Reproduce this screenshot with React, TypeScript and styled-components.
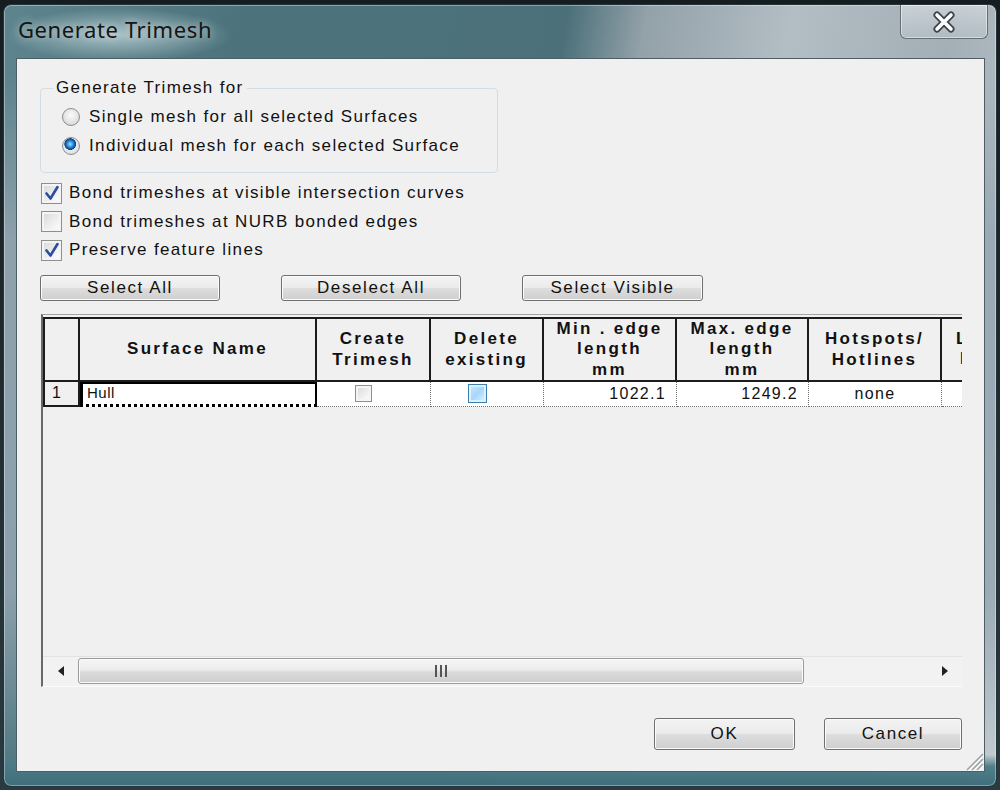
import React from 'react';
import styled, { createGlobalStyle } from 'styled-components';

const GlobalStyle = createGlobalStyle`
  html, body {
    margin: 0;
    padding: 0;
    background: #1f2b2f;
  }
  * {
    box-sizing: border-box;
  }
`;

const UI_FONT = `"Liberation Sans", Arial, sans-serif`;

const Desktop = styled.div`
  width: 1000px;
  height: 790px;
  padding: 4px 0 0 3px;
  overflow: hidden;
  background: linear-gradient(180deg, #151d20 0%, #2a3a40 100%);
`;

const Window = styled.div`
  width: 994px;
  height: 783px;
  display: flex;
  flex-direction: column;
  padding: 0 11px 14px 12px;
  border: 1px solid #25343a;
  border-radius: 8px;
  box-shadow: inset 0 0 0 1px rgba(255, 255, 255, 0.35);
  background:
    linear-gradient(180deg, transparent 96%, rgba(74, 122, 134, 0.95) 97.5%, #3f6d79 100%),
    linear-gradient(180deg, transparent 9%, rgba(150, 166, 178, 0.85) 30%, rgba(150, 166, 178, 0.85) 75%, transparent 96%),
    radial-gradient(ellipse 150px 36px at 115px 30px, rgba(225, 238, 240, 0.6), transparent 75%),
    linear-gradient(100deg, #5e858e 0%, #4c737c 22%, #4b7079 50%, #93a1a9 57%, #b3bdc4 70%, #a3aeb6 84%, #c3cbd1 100%);
`;

const TitleBar = styled.div`
  height: 53px;
  display: flex;
  justify-content: space-between;
  align-items: flex-start;
  flex-shrink: 0;
`;

const Title = styled.div`
  padding: 9px 0 0 2px;
  font-family: "Noto Sans", "Open Sans", sans-serif;
  font-size: 22px;
  letter-spacing: 0.6px;
  color: #151515;
  text-shadow: 0 0 8px rgba(255, 255, 255, 0.6);
`;

const CloseButton = styled.div`
  width: 88px;
  height: 34px;
  margin-right: -3px;
  display: flex;
  align-items: center;
  justify-content: center;
  border: 1px solid #646e74;
  border-top: none;
  border-radius: 0 0 6px 6px;
  background: linear-gradient(180deg, rgba(230, 235, 238, 0.55), rgba(190, 200, 206, 0.45));
  box-shadow: inset 0 0 0 1px rgba(255, 255, 255, 0.45);
`;

const Client = styled.div`
  position: relative;
  flex: 1;
  display: flex;
  flex-direction: column;
  padding: 0 22px 0 23px;
  background: #f0f0f0;
  border: 1px solid #4d5e65;
  font-family: ${UI_FONT};
  font-size: 17px;
  letter-spacing: 1.35px;
  color: #111;
`;

const Group = styled.fieldset`
  width: 458px;
  margin: 20px 0 0 0;
  padding: 5px 12px 12px 12px;
  border: 1px solid #d3dde3;
  border-radius: 4px;
`;

const Legend = styled.legend`
  padding: 0 3px;
  line-height: 18px;
`;

const OptionRow = styled.div`
  height: 29px;
  display: flex;
  align-items: center;
  gap: 9px;
  padding-left: 9px;
`;

const Radio = styled.span<{ $checked?: boolean }>`
  width: 18px;
  height: 18px;
  border-radius: 50%;
  border: 1px solid #8b8d8f;
  flex-shrink: 0;
  background: ${(p) =>
    p.$checked
      ? 'radial-gradient(circle at 45% 38%, #a6e0ff 0, #2a93de 22%, #0d4f98 38%, #0b3f7c 42%, #e9ecee 46%, #d3d6d8 100%)'
      : 'radial-gradient(circle at 50% 40%, #fbfbfb 0, #e4e4e4 55%, #c9c9c9 100%)'};
`;

const Checks = styled.div`
  margin-top: 6px;
`;

const CheckRow = styled.div`
  height: 28.5px;
  display: flex;
  align-items: center;
  gap: 7px;
  padding-left: 1px;
`;

const CheckBox = styled.span<{ $size?: number; $hot?: boolean }>`
  width: ${(p) => p.$size ?? 21}px;
  height: ${(p) => p.$size ?? 21}px;
  flex-shrink: 0;
  display: flex;
  align-items: center;
  justify-content: center;
  border: 1px solid ${(p) => (p.$hot ? '#3c7fb1' : '#8f8f8f')};
  background: ${(p) =>
    p.$hot
      ? 'linear-gradient(135deg, #cfeaff 0%, #a7d6fb 50%, #e6f4ff 100%)'
      : 'linear-gradient(135deg, #d6d6d6 0%, #ececec 50%, #ffffff 100%)'};
  box-shadow: inset 0 0 0 2px ${(p) => (p.$hot ? '#def0fd' : '#f4f4f4')};
`;

const ButtonRow = styled.div`
  display: flex;
  gap: 61px;
  margin-top: 10px;
`;

const PushButton = styled.button<{ $width: number; $height?: number }>`
  width: ${(p) => p.$width}px;
  height: ${(p) => p.$height ?? 26}px;
  padding: 0;
  border: 1px solid #707070;
  border-radius: 3px;
  background: linear-gradient(180deg, #f3f3f3 0%, #ebebeb 48%, #dddddd 52%, #cfcfcf 100%);
  box-shadow: inset 0 0 0 1px #fbfbfb;
  font-family: ${UI_FONT};
  font-size: 17px;
  letter-spacing: 1.6px;
  color: #111;
`;

const GridFrame = styled.div`
  width: 921px;
  height: 373px;
  margin: 13px 0 0 1px;
  display: flex;
  flex-direction: column;
  border-left: 2px solid #686868;
  border-top: 1px solid #a3a3a3;
  border-bottom: 1px solid #fbfbfb;
  padding-top: 2px;
  overflow: hidden;
`;

const cols = [37, 237, 114, 113, 133, 132, 133, 130];

const GridRows = styled.div`
  display: grid;
  grid-template-columns: ${cols.map((c) => `${c}px`).join(' ')};
  width: ${cols.reduce((a, b) => a + b, 0)}px;
`;

const HeaderCell = styled.div<{ $first?: boolean; $left?: boolean }>`
  height: 65px;
  display: flex;
  align-items: center;
  justify-content: ${(p) => (p.$left ? 'flex-start' : 'center')};
  padding: ${(p) => (p.$left ? '0 0 0 14px' : '1px 0 0 0')};
  text-align: center;
  white-space: pre-line;
  font-weight: bold;
  font-size: 17px;
  line-height: 20.5px;
  letter-spacing: 2.3px;
  background: #f0f0f0;
  border-top: 2px solid #1c1c1c;
  border-bottom: 2px solid #1c1c1c;
  border-right: 2px solid #1c1c1c;
  border-left: ${(p) => (p.$first ? '2px solid #1c1c1c' : 'none')};
`;

const RowHead = styled.div`
  height: 25px;
  padding-left: 7px;
  display: flex;
  align-items: center;
  background: #f0f0f0;
  border-left: 2px solid #1c1c1c;
  border-right: 2px solid #1c1c1c;
  border-bottom: 2px solid #1c1c1c;
  font-size: 16px;
`;

const NameCell = styled.div`
  height: 25px;
  padding-left: 4px;
  display: flex;
  align-items: center;
  background: #fff;
  border-left: 3px solid #000;
  border-right: 2px solid #000;
  border-bottom: 3px dotted #000;
  box-shadow: inset 0 2px 0 #000;
  font-size: 15px;
  letter-spacing: 0.5px;
`;

const DataCell = styled.div<{ $align?: 'left' | 'center' | 'right' }>`
  height: 25px;
  display: flex;
  align-items: center;
  justify-content: ${(p) =>
    p.$align === 'right' ? 'flex-end' : p.$align === 'left' ? 'flex-start' : 'center'};
  padding: ${(p) => (p.$align === 'right' ? '0 10px 0 0' : p.$align === 'left' ? '0 0 0 35px' : '0')};
  background: #fff;
  border-right: 1px dotted #6d6d6d;
  border-bottom: 1px dotted #6d6d6d;
  font-size: 16px;
  letter-spacing: 1.3px;
`;

const Filler = styled.div`
  flex: 1;
  background: #f0f0f0;
`;

const HScroll = styled.div`
  height: 30px;
  display: flex;
  align-items: center;
  background: #f2f2f2;
  border-top: 1px solid #e2e2e2;
`;

const ScrollArrow = styled.div`
  width: 35px;
  height: 100%;
  display: flex;
  align-items: center;
  justify-content: center;
  flex-shrink: 0;
`;

const Track = styled.div`
  flex: 1;
  height: 100%;
  display: flex;
  align-items: center;
`;

const Thumb = styled.div`
  height: 26px;
  display: flex;
  align-items: center;
  justify-content: center;
  border: 1px solid #9c9c9c;
  border-radius: 3px;
  background: linear-gradient(180deg, #f6f6f6 0%, #ececec 45%, #dadada 55%, #cdcdcd 100%);
  box-shadow: inset 0 0 0 1px #fafafa;
`;

const Footer = styled.div`
  display: flex;
  justify-content: flex-end;
  gap: 29px;
  margin-top: 31px;
`;

const ResizeGrip = styled.div`
  position: absolute;
  right: 0;
  bottom: 0;
  width: 20px;
  height: 20px;
`;

const Label = styled.span``;

const Check = () => (
  <svg width="16" height="16" viewBox="0 0 16 16">
    <path d="M2.5 8.5 L6.5 13.5 L13.5 2" fill="none" stroke="#2c4c9e" strokeWidth="2.6" strokeLinecap="round" strokeLinejoin="round" />
  </svg>
);

const CloseGlyph = () => (
  <svg width="26" height="22" viewBox="0 0 26 22">
    <path d="M6 4 L20 18 M20 4 L6 18" stroke="#3b4348" strokeWidth="7" strokeLinecap="round" />
    <path d="M6 4 L20 18 M20 4 L6 18" stroke="#ffffff" strokeWidth="3.6" strokeLinecap="round" />
  </svg>
);

const headers = [
  '',
  'Surface Name',
  'Create\nTrimesh',
  'Delete\nexisting',
  'Min . edge\nlength\nmm',
  'Max. edge\nlength\nmm',
  'Hotspots/\nHotlines',
  'Layer\nLock',
];

export default function App() {
  return (
    <>
      <GlobalStyle />
      <Desktop>
        <Window>
          <TitleBar>
            <Title>Generate Trimesh</Title>
            <CloseButton>
              <CloseGlyph />
            </CloseButton>
          </TitleBar>
          <Client>
            <Group>
              <Legend>Generate Trimesh for</Legend>
              <OptionRow>
                <Radio />
                <Label>Single mesh for all selected Surfaces</Label>
              </OptionRow>
              <OptionRow>
                <Radio $checked />
                <Label>Individual mesh for each selected Surface</Label>
              </OptionRow>
            </Group>

            <Checks>
              <CheckRow>
                <CheckBox>
                  <Check />
                </CheckBox>
                <Label>Bond trimeshes at visible intersection curves</Label>
              </CheckRow>
              <CheckRow>
                <CheckBox />
                <Label>Bond trimeshes at NURB bonded edges</Label>
              </CheckRow>
              <CheckRow>
                <CheckBox>
                  <Check />
                </CheckBox>
                <Label>Preserve feature lines</Label>
              </CheckRow>
            </Checks>

            <ButtonRow>
              <PushButton $width={180}>Select All</PushButton>
              <PushButton $width={180}>Deselect All</PushButton>
              <PushButton $width={181}>Select Visible</PushButton>
            </ButtonRow>

            <GridFrame>
              <GridRows>
                {headers.map((h, i) => (
                  <HeaderCell key={i} $first={i === 0} $left={i === headers.length - 1}>
                    {h}
                  </HeaderCell>
                ))}
                <RowHead>1</RowHead>
                <NameCell>Hull</NameCell>
                <DataCell $align="center" style={{ paddingRight: 20 }}>
                  <CheckBox $size={17} />
                </DataCell>
                <DataCell $align="center" style={{ paddingRight: 20 }}>
                  <CheckBox $size={19} $hot />
                </DataCell>
                <DataCell $align="right">1022.1</DataCell>
                <DataCell $align="right">1249.2</DataCell>
                <DataCell $align="center">none</DataCell>
                <DataCell $align="left" />
              </GridRows>
              <Filler />
              <HScroll>
                <ScrollArrow>
                  <svg width="8" height="12" viewBox="0 0 8 12">
                    <polygon points="7,1 1,6 7,11" fill="#222" />
                  </svg>
                </ScrollArrow>
                <Track>
                  <Thumb style={{ width: 726 }}>
                    <svg width="16" height="14" viewBox="0 0 16 14">
                      <path d="M3 1 V13 M8 1 V13 M13 1 V13" stroke="#555" strokeWidth="2" />
                    </svg>
                  </Thumb>
                </Track>
                <ScrollArrow>
                  <svg width="8" height="12" viewBox="0 0 8 12">
                    <polygon points="1,1 7,6 1,11" fill="#222" />
                  </svg>
                </ScrollArrow>
              </HScroll>
            </GridFrame>

            <Footer>
              <PushButton $width={141} $height={32}>OK</PushButton>
              <PushButton $width={138} $height={32}>Cancel</PushButton>
            </Footer>

            <ResizeGrip>
              <svg width="20" height="20" viewBox="0 0 20 20">
                <path d="M19 3 L3 19 M19 8 L8 19 M19 13 L13 19" stroke="#9aa2a6" strokeWidth="1.5" />
                <path d="M20 4 L4 20 M20 9 L9 20 M20 14 L14 20" stroke="#ffffff" strokeWidth="1" />
              </svg>
            </ResizeGrip>
          </Client>
        </Window>
      </Desktop>
    </>
  );
}
